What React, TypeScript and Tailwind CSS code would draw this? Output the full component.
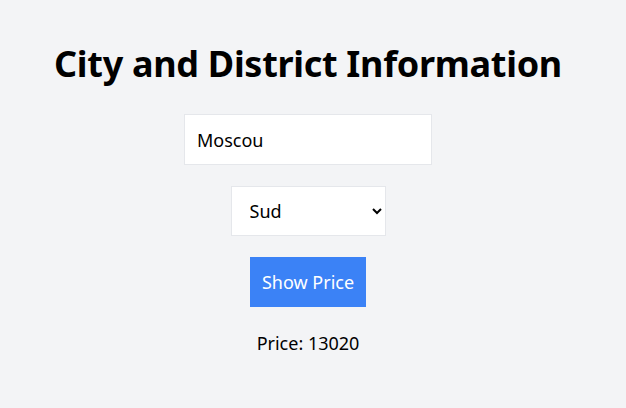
export default function App() {
  return (
    <div
      className="min-h-screen bg-gray-100 flex flex-col items-center pt-[40px] pr-[10px] text-black"
      style={{ fontFamily: '"Noto Sans", "Open Sans", sans-serif' }}
    >
      <h1 className="text-4xl font-bold leading-[48px] tracking-[-0.3px]">City and District Information</h1>

      <input
        type="text"
        defaultValue="Moscou"
        className="mt-[26px] w-[248px] h-[51px] border border-gray-200 bg-white px-3 text-lg outline-none"
      />

      <select
        defaultValue="Sud"
        className="mt-[21px] w-[155px] h-[50px] border border-gray-200 bg-white pl-[14px] pr-2 text-lg outline-none"
      >
        <option>Nord</option>
        <option>Sud</option>
        <option>Est</option>
        <option>Ouest</option>
      </select>

      <button className="mt-[21px] h-[50px] w-[116px] bg-[#3b82f6] text-white text-lg">
        Show Price
      </button>

      <p className="mt-[22px] text-lg">Price: 13020</p>
    </div>
  );
}
